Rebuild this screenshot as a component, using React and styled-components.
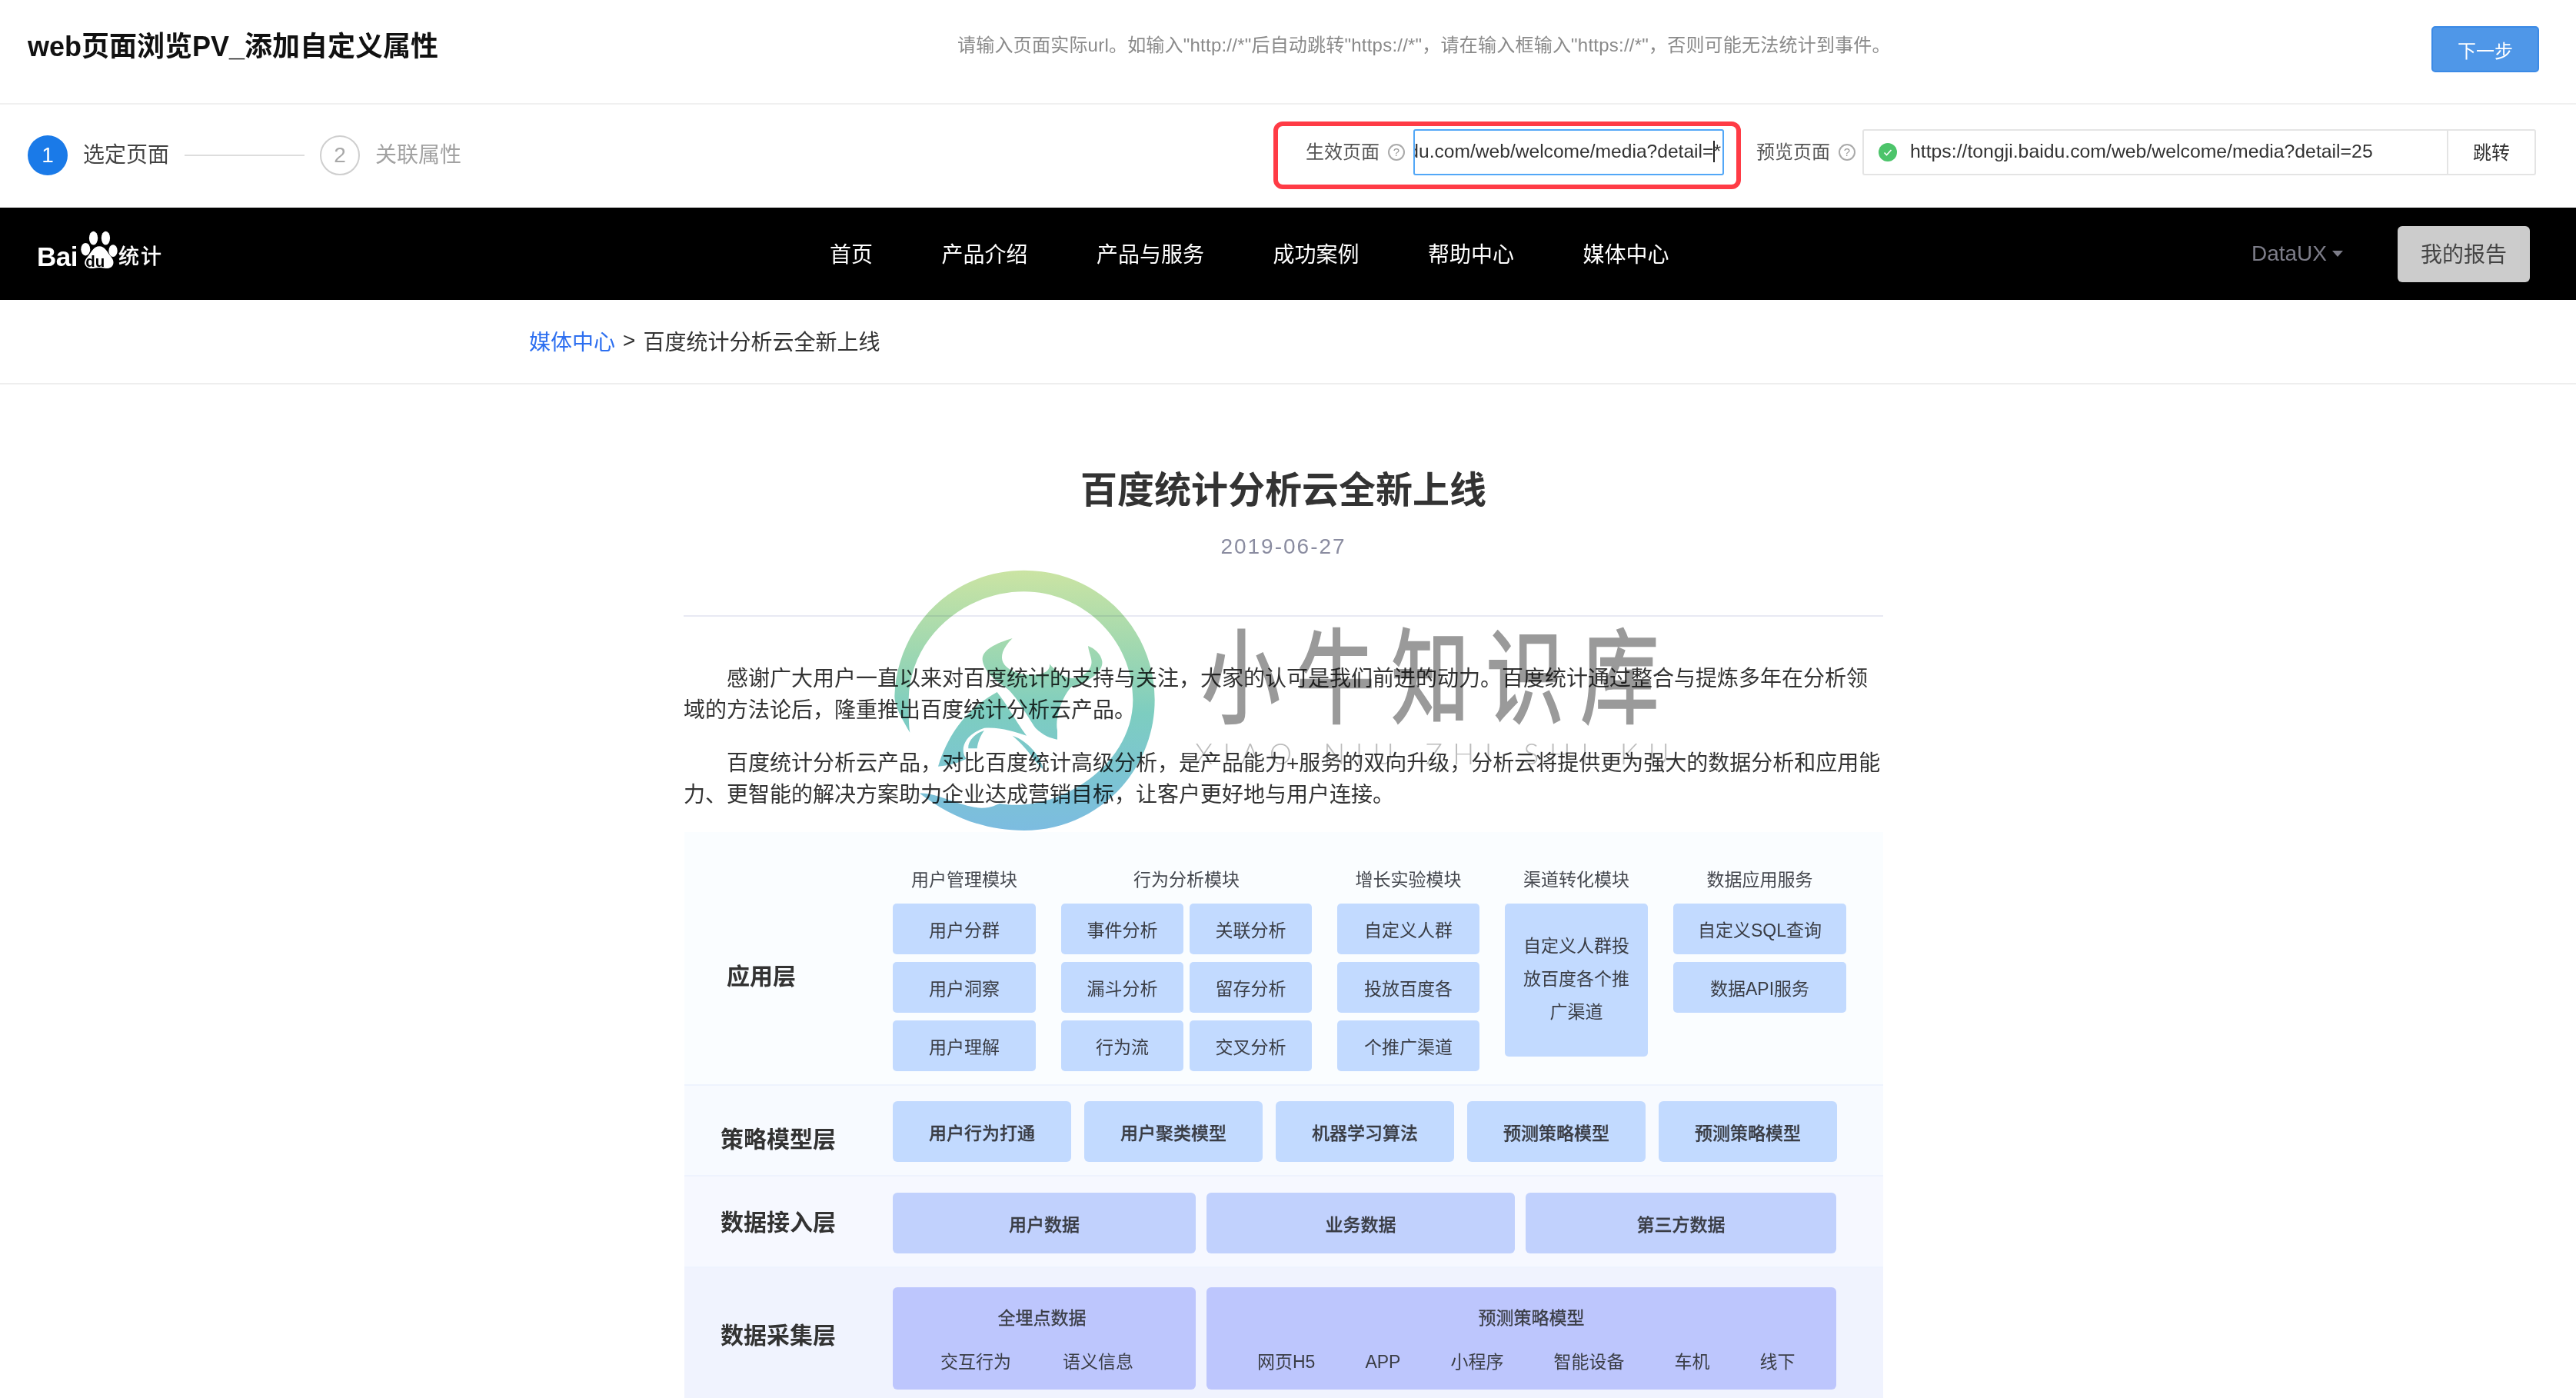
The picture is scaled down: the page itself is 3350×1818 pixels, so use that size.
import React from 'react';
import styled, { createGlobalStyle } from 'styled-components';

const Global = createGlobalStyle`
  html, body { margin: 0; padding: 0; background: #fff; }
  body { width: 3350px; height: 1818px; overflow: hidden; font-family: "Liberation Sans", "Noto Sans CJK SC", sans-serif; color: #333; }
  * { box-sizing: border-box; }
`;
const Page = styled.div`position: relative; width: 3350px; height: 1818px; overflow: hidden;`;

const TopBar = styled.header`
  height: 136px; border-bottom: 2px solid #f0f0f0; padding: 0 48px 20px 36px;
  display: flex; align-items: center;
`;
const PageTitle = styled.h2`margin: 0; font-size: 36px; font-weight: 700; color: #111; white-space: nowrap;`;
const Hint = styled.p`margin: 0 0 2px 675px; font-size: 24px; letter-spacing: 0.22px; color: #8a8a8a; white-space: nowrap;`;
const NextButton = styled.button`
  margin: 14px 0 0 auto; width: 140px; height: 60px; border: 2px solid #3b8ae6; border-radius: 5px;
  background: #4f97e8; color: #fff; font: 24px "Liberation Sans", "Noto Sans CJK SC", sans-serif;
`;

const StepBar = styled.div`
  height: 134px; padding: 0 52px 2px 36px; display: flex; align-items: center;
`;
const StepCircle = styled.span`
  width: 52px; height: 52px; border-radius: 50%; display: flex; align-items: center; justify-content: center;
  font-size: 28px;
  background: ${p => p.$active ? '#1a7ae8' : '#fff'};
  color: ${p => p.$active ? '#fff' : '#a8a8a8'};
  border: ${p => p.$active ? 'none' : '2px solid #cfcfcf'};
`;
const StepLabel = styled.span`margin-left: 20px; font-size: 28px; color: ${p => p.$active ? '#444' : '#a2a2a2'}; white-space: nowrap; position: relative; top: -3px;`;
const StepLine = styled.span`width: 156px; height: 2px; margin: 0 20px; background: #ddd;`;
const Fields = styled.div`margin-left: auto; display: flex; align-items: flex-start;`;
const Highlight = styled.div`
  width: 608px; height: 88px; border: 6px solid #ff3b45; border-radius: 12px; padding: 4px 15px 0 36px;
  display: flex; align-items: flex-start;
`;
const FieldLabel = styled.span`height: 60px; line-height: 60px; font-size: 24px; color: #555; white-space: nowrap;`;
const Help = styled.span`
  width: 22px; height: 22px; margin: 19px 11px 0 11px; flex: none; border-radius: 50%; border: 2px solid #aaa; color: #999;
  font-size: 15px; line-height: 18px; text-align: center;
`;
const ActiveInput = styled.div`
  width: 404px; height: 60px; flex: none; border: 2px solid #52a7f7; border-radius: 3px; overflow: hidden;
  display: flex; justify-content: flex-end; align-items: center; padding: 0 2px 2px 0;
  font-size: 24.6px; color: #333; white-space: nowrap;
`;
const Caret = styled.span`flex: none; width: 2px; height: 28px; margin-right: -2px; background: #222;`;
const Preview = styled.div`margin: 10px 0 0 20px; display: flex; align-items: flex-start;`;
const PreviewBox = styled.div`
  width: 762px; height: 60px; margin-left: -2px; border: 2px solid #e4e4e4; display: flex; align-items: center; padding: 0 0 2px 19px;
  font-size: 24.8px; color: #333; white-space: nowrap; border-radius: 3px 0 0 3px;
`;
const GreenDot = styled.svg`width: 24px; height: 24px; margin: 2px 17px 0 0; flex: none;`;
const JumpButton = styled.button`
  width: 116px; height: 60px; margin-left: -2px; border: 2px solid #e4e4e4; background: #fff; color: #333;
  font: 24px "Liberation Sans", "Noto Sans CJK SC", sans-serif; padding: 0 0 4px; border-radius: 0 3px 3px 0;
`;

const NavBar = styled.nav`
  height: 120px; background: #000; padding: 0 60px 0 48px; display: flex; align-items: center; color: #fff;
`;
const Logo = styled.div`width: 162px; height: 52px; margin-bottom: 8px; flex: none; display: flex; align-items: flex-end; color: #fff;`;
const LogoLatin = styled.span`font-size: 35px; line-height: 36px; letter-spacing: -0.5px; font-weight: 700;`;
const LogoPaw = styled.svg`width: 53px; height: 53px; flex: none;`;
const LogoCn = styled.span`font-size: 27px; line-height: 35px; letter-spacing: 2px; white-space: nowrap; -webkit-text-stroke: 0.5px #fff;`;
const Menu = styled.ul`list-style: none; margin: 0 0 3px 869px; padding: 0; display: flex; gap: 89.5px;`;
const MenuItem = styled.li`font-size: 28px; white-space: nowrap;`;
const Account = styled.div`margin-left: auto; font-size: 28px; color: #7c7c88; display: flex; align-items: center; white-space: nowrap;`;
const AccountCaret = styled.span`
  width: 0; height: 0; margin-left: 7px; border-left: 7px solid transparent; border-right: 7px solid transparent; border-top: 8px solid #7c7c88;
`;
const ReportButton = styled.button`
  margin-left: 71px; width: 172px; height: 73px; border: none; border-radius: 6px; background: #ccc; color: #444; padding: 0 0 3px;
  font: 28px "Liberation Sans", "Noto Sans CJK SC", sans-serif;
`;

const Breadcrumb = styled.div`
  height: 110px; border-bottom: 2px solid #eee; padding: 0 0 2px 688px; display: flex; align-items: center; font-size: 28px; color: #333; white-space: nowrap;
`;
const CrumbLink = styled.a`color: #2d6ff0;`;
const CrumbSep = styled.span`margin: 0 10px;`;

const Article = styled.article`width: 1560px; margin-left: 889px; padding-top: 108px;`;
const ArticleTitle = styled.h1`margin: 0; font-size: 48px; line-height: 60px; font-weight: 700; text-align: center; color: #333;`;
const ArticleDate = styled.div`margin-top: 23px; font-size: 28px; line-height: 40px; letter-spacing: 2px; text-align: center; color: #8a8ca0;`;
const Rule = styled.hr`margin: 69px 0 0; border: none; height: 2px; background: #e8e9f3;`;
const Para = styled.p`margin: ${p => p.$first ? '60px' : '28px'} 0 0; font-size: 28px; line-height: 41px; text-indent: 56px; color: #333;`;

const Diagram = styled.section`margin-top: 28px; margin-left: 1px; width: 1559px; filter: blur(0.45px); color: #3a3d45;`;
const Layer = styled.div`
  display: flex; height: ${p => p.$h}px; background: ${p => p.$bg}; border-bottom: 2px solid #eef3fe; padding-top: ${p => p.$pt}px;
`;
const LayerLabel = styled.div`
  width: 271px; flex: none; padding-left: ${p => p.$pl || 47}px; padding-top: ${p => p.$lt}px; font-size: 30px; line-height: 36px; font-weight: 700; color: #333; white-space: nowrap;
`;
const Modules = styled.div`display: flex; gap: 33px; align-items: flex-start;`;
const Module = styled.div`width: ${p => p.$w}px; flex: none;`;
const ModuleHead = styled.div`height: 30px; line-height: 30px; margin-bottom: 16px; font-size: 23px; text-align: center; white-space: nowrap; color: #44474e;`;
const Tiles = styled.div`display: grid; grid-template-columns: repeat(${p => p.$cols || 1}, 1fr); gap: 10px 8px;`;
const Tile = styled.div`
  height: 66px; padding-bottom: 1px; border-radius: 5px; background: #c2daff; display: flex; align-items: center; justify-content: center;
  font-size: 23px; text-align: center; white-space: nowrap;
`;
const TallTile = styled.div`
  height: 199px; border-radius: 5px; background: #c2daff; padding: 0 20px 3px; display: flex; align-items: center; text-align: center;
  font-size: 23px; line-height: 43px;
`;
const Row = styled.div`display: flex; gap: ${p => p.$gap}px;`;
const Block = styled.div`
  width: ${p => p.$w}px; height: 79px; flex: none; border-radius: 6px; background: ${p => p.$bg}; display: flex; align-items: center; justify-content: center;
  font-size: 23px; font-weight: 500; white-space: nowrap; -webkit-text-stroke: 0.3px #3a3d45;
`;
const Source = styled.div`
  width: ${p => p.$w}px; height: 133px; flex: none; border-radius: 6px; background: #bdc6fd; padding-top: 24px; font-size: 23px;
`;
const SourceHead = styled.div`
  height: 32px; line-height: 32px; text-align: center; white-space: nowrap; -webkit-text-stroke: 0.3px #3a3d45;
  padding-left: ${p => p.$shift > 0 ? p.$shift : 0}px; padding-right: ${p => p.$shift < 0 ? -p.$shift : 0}px;
`;
const SourceItems = styled.div`display: flex; gap: ${p => p.$gap}px; margin-top: 26px; padding-left: ${p => p.$pl}px; line-height: 30px; white-space: nowrap;`;

const MarkLogo = styled.svg`position: absolute; left: 1140px; top: 730px; width: 380px; height: 360px; mix-blend-mode: multiply;`;
const MarkTitle = styled.div`
  position: absolute; left: 1563px; top: 789px; width: 900px; transform: scaleX(0.76); transform-origin: left top;
  font-size: 134px; line-height: 190px; letter-spacing: 28px; color: #9a9a9a; -webkit-text-stroke: 2.5px #9a9a9a; mix-blend-mode: multiply; white-space: nowrap;
`;
const MarkSub = styled.div`
  position: absolute; left: 1554px; top: 958px; font-family: Lato, "Liberation Sans", sans-serif; font-weight: 300;
  font-size: 37px; line-height: 44px; letter-spacing: 13.5px; word-spacing: 4px; color: #bcbcbc; mix-blend-mode: multiply; white-space: nowrap;
`;

const HelpMark = () => <Help>?</Help>;

export default function App() {
  return (
    <Page>
      <Global />
      <TopBar>
        <PageTitle>web页面浏览PV_添加自定义属性</PageTitle>
        <Hint>请输入页面实际url。如输入"http://*"后自动跳转"https://*"，请在输入框输入"https://*"，否则可能无法统计到事件。</Hint>
        <NextButton>下一步</NextButton>
      </TopBar>
      <StepBar>
        <StepCircle $active>1</StepCircle>
        <StepLabel $active>选定页面</StepLabel>
        <StepLine />
        <StepCircle>2</StepCircle>
        <StepLabel>关联属性</StepLabel>
        <Fields>
          <Highlight>
            <FieldLabel>生效页面</FieldLabel>
            <HelpMark />
            <ActiveInput>du.com/web/welcome/media?detail=<Caret />*</ActiveInput>
          </Highlight>
          <Preview>
            <FieldLabel>预览页面</FieldLabel>
            <HelpMark />
            <PreviewBox>
              <GreenDot viewBox="0 0 24 24">
                <circle cx="12" cy="12" r="12" fill="#4cc46a" />
                <path d="M7.5 12.5l3 3 6-6.5" fill="none" stroke="#fff" strokeWidth="1.6" />
              </GreenDot>
              https://tongji.baidu.com/web/welcome/media?detail=25
            </PreviewBox>
            <JumpButton>跳转</JumpButton>
          </Preview>
        </Fields>
      </StepBar>
      <NavBar>
        <Logo>
          <LogoLatin>Bai</LogoLatin>
          <LogoPaw viewBox="205 40 160 160">
            <ellipse cx="267" cy="72" rx="17" ry="27" fill="#fff" />
            <ellipse cx="315" cy="72" rx="17" ry="27" fill="#fff" />
            <ellipse cx="236" cy="116" rx="18" ry="25" fill="#fff" />
            <ellipse cx="344" cy="122" rx="17" ry="24" fill="#fff" />
            <path d="M290 104c22 0 30 22 42 36 12 14 16 24 12 36-5 14-20 17-34 14-14-3-26-3-40 0-15 3-30 0-36-14-4-12 2-22 14-36 12-14 20-36 42-36z" fill="#fff" />
            <text x="236" y="184" fill="#000" fontSize="62" fontWeight="700" fontFamily="Liberation Sans, sans-serif">du</text>
          </LogoPaw>
          <LogoCn>统计</LogoCn>
        </Logo>
        <Menu>
          {['首页', '产品介绍', '产品与服务', '成功案例', '帮助中心', '媒体中心'].map(t => <MenuItem key={t}>{t}</MenuItem>)}
        </Menu>
        <Account>DataUX<AccountCaret /></Account>
        <ReportButton>我的报告</ReportButton>
      </NavBar>
      <Breadcrumb>
        <CrumbLink>媒体中心</CrumbLink><CrumbSep>&gt;</CrumbSep>百度统计分析云全新上线
      </Breadcrumb>
      <Article>
        <ArticleTitle>百度统计分析云全新上线</ArticleTitle>
        <ArticleDate>2019-06-27</ArticleDate>
        <Rule />
        <Para $first>感谢广大用户一直以来对百度统计的支持与关注，大家的认可是我们前进的动力。百度统计通过整合与提炼多年在分析领域的方法论后，隆重推出百度统计分析云产品。</Para>
        <Para>百度统计分析云产品，对比百度统计高级分析，是产品能力+服务的双向升级，分析云将提供更为强大的数据分析和应用能力、更智能的解决方案助力企业达成营销目标，让客户更好地与用户连接。</Para>
        <Diagram>
          <Layer $h={330} $bg="#fafdff" $pt={47}>
            <LayerLabel $pl={55} $lt={123}>应用层</LayerLabel>
            <Modules>
              <Module $w={186}>
                <ModuleHead>用户管理模块</ModuleHead>
                <Tiles><Tile>用户分群</Tile><Tile>用户洞察</Tile><Tile>用户理解</Tile></Tiles>
              </Module>
              <Module $w={326}>
                <ModuleHead>行为分析模块</ModuleHead>
                <Tiles $cols={2}>
                  <Tile>事件分析</Tile><Tile>关联分析</Tile>
                  <Tile>漏斗分析</Tile><Tile>留存分析</Tile>
                  <Tile>行为流</Tile><Tile>交叉分析</Tile>
                </Tiles>
              </Module>
              <Module $w={185}>
                <ModuleHead>增长实验模块</ModuleHead>
                <Tiles><Tile>自定义人群</Tile><Tile>投放百度各</Tile><Tile>个推广渠道</Tile></Tiles>
              </Module>
              <Module $w={186}>
                <ModuleHead>渠道转化模块</ModuleHead>
                <TallTile>自定义人群投放百度各个推广渠道</TallTile>
              </Module>
              <Module $w={225}>
                <ModuleHead>数据应用服务</ModuleHead>
                <Tiles><Tile>自定义SQL查询</Tile><Tile>数据API服务</Tile></Tiles>
              </Module>
            </Modules>
          </Layer>
          <Layer $h={118} $bg="#f7faff" $pt={20}>
            <LayerLabel $lt={32}>策略模型层</LayerLabel>
            <Row $gap={17}>
              {['用户行为打通', '用户聚类模型', '机器学习算法', '预测策略模型', '预测策略模型'].map((t, i) => <Block key={i} $w={232} $bg="#c2daff">{t}</Block>)}
            </Row>
          </Layer>
          <Layer $h={119} $bg="#f6f8ff" $pt={21}>
            <LayerLabel $lt={21}>数据接入层</LayerLabel>
            <Row $gap={14}>
              <Block $w={394} $bg="#c1d1fd">用户数据</Block>
              <Block $w={401} $bg="#c1d1fd">业务数据</Block>
              <Block $w={404} $bg="#c1d1fd">第三方数据</Block>
            </Row>
          </Layer>
          <Layer $h={200} $bg="#f0f3fe" $pt={25}>
            <LayerLabel $lt={45}>数据采集层</LayerLabel>
            <Row $gap={14}>
              <Source $w={394}>
                <SourceHead $shift={-6}>全埋点数据</SourceHead>
                <SourceItems $gap={67} $pl={62}><span>交互行为</span><span>语义信息</span></SourceItems>
              </Source>
              <Source $w={819}>
                <SourceHead $shift={26}>预测策略模型</SourceHead>
                <SourceItems $gap={65} $pl={66}>
                  {['网页H5', 'APP', '小程序', '智能设备', '车机', '线下'].map(t => <span key={t}>{t}</span>)}
                </SourceItems>
              </Source>
            </Row>
          </Layer>
        </Diagram>
      </Article>

      <MarkLogo viewBox="0 0 1140 1080">
        <defs>
          <linearGradient id="markFill" gradientUnits="userSpaceOnUse" x1="0" y1="35" x2="0" y2="1050">
            <stop offset="0" stopColor="#cbe4a3" />
            <stop offset="0.3" stopColor="#a0d8b0" />
            <stop offset="0.55" stopColor="#7dcdc0" />
            <stop offset="0.78" stopColor="#7cc5d2" />
            <stop offset="1" stopColor="#7cbce0" />
          </linearGradient>
        </defs>
        <g fill="url(#markFill)">
          <path d="M130 668C90 600 70 560 70 525C80 250 300 35 575 35C860 35 1085 260 1085 540C1085 820 860 1050 575 1050C410 1050 280 990 168 905C230 900 330 960 410 962C450 962 465 950 480 945C700 985 1000 800 1000 540C1000 300 800 118 575 118C350 118 130 290 125 540C125 590 125 640 130 668Z" />
          <path d="M530 300C465 320 410 345 413 385C418 430 470 470 500 490C545 520 590 610 620 650C650 680 680 690 705 695L705 660C695 600 730 520 760 490C830 470 885 430 880 390C875 360 850 340 825 330C830 370 850 390 830 420C810 450 770 470 725 445C700 425 680 410 675 400C680 440 620 450 570 440C500 425 450 380 530 300Z" />
          <path d="M470 510C380 560 290 640 240 800C290 795 320 785 350 770C325 740 335 680 420 650C480 645 540 665 585 680C540 620 510 560 470 510Z" />
          <path d="M420 660C385 670 355 700 358 730L392 730C395 705 405 680 420 660Z" />
          <path d="M530 680C590 700 640 760 650 810C620 790 600 740 530 680Z" />
        </g>
      </MarkLogo>
      <MarkTitle>小牛知识库</MarkTitle>
      <MarkSub>XIAO NIU ZHI SHI KU</MarkSub>
    </Page>
  );
}
